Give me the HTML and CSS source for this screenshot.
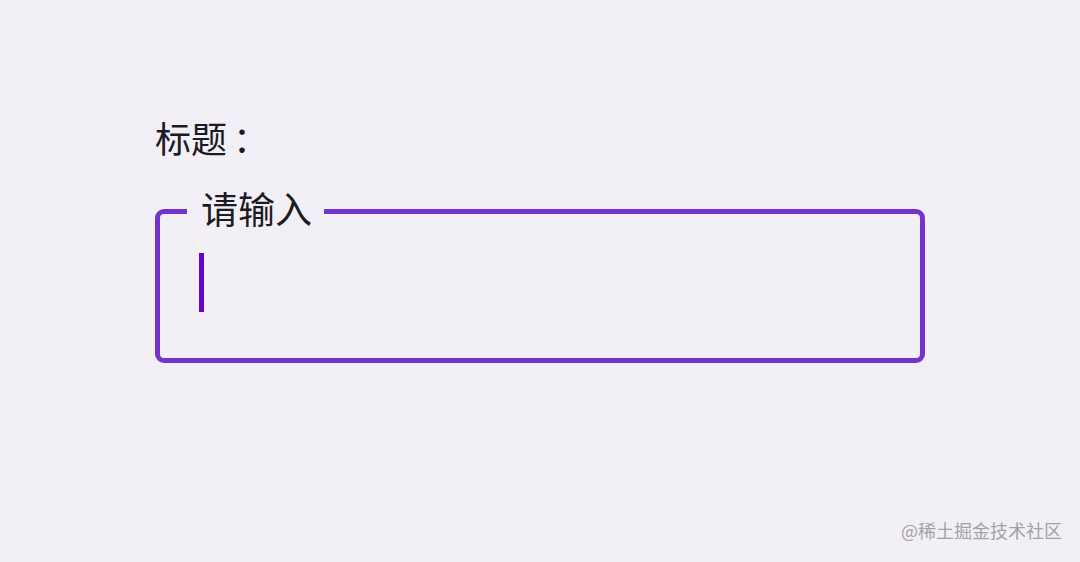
FILE: index.html
```html
<!DOCTYPE html>
<html lang="zh-CN">

<head>
    <meta charset="UTF-8">
    <meta name="viewport" content="width=device-width, initial-scale=1.0">
    <title>输入框</title>

    <link rel="stylesheet" href="styles.css">
</head>

<body>
    <div class="page">
        <div class="title">标题<span class="colon">：</span></div>

        <fieldset class="field">
            <legend class="field-label">请输入</legend>
            <div class="field-body">
                <span class="caret"></span>
            </div>
        </fieldset>
    </div>

    <div class="watermark">@稀土掘金技术社区</div>
</body>

</html>
```

FILE: styles.css
```css
html, body {
    height: 100%;
}

body {
    background: #f2f0f6;
    margin: 0;
    font-family: "Noto Sans CJK SC", "Noto Sans", sans-serif;
    color: #1c1b1f;
    overflow: hidden;
    position: relative;
}

.page {
    display: flex;
    flex-direction: column;
    width: 770px;
    padding: 113px 0 0 155px;
}

.title {
    font-size: 36px;
    line-height: 48px;
}

.colon {
    margin-left: 6px;
}

.field {
    margin: 29px 0 0 0;
    padding: 0;
    border: 5px solid #7432cf;
    border-radius: 9px;
}

.field-label {
    font-size: 37px;
    line-height: 36px;
    padding: 0 12px 6px 14px;
    margin-left: 27px;
}

.field-body {
    display: flex;
    align-items: flex-start;
    height: 105px;
    padding: 21px 0 0 39px;
}

.caret {
    width: 5px;
    height: 59px;
    background: #6407c9;
}

.watermark {
    position: absolute;
    right: 18px;
    bottom: 19px;
    font-size: 18px;
    color: #a3a2a6;
}
```
